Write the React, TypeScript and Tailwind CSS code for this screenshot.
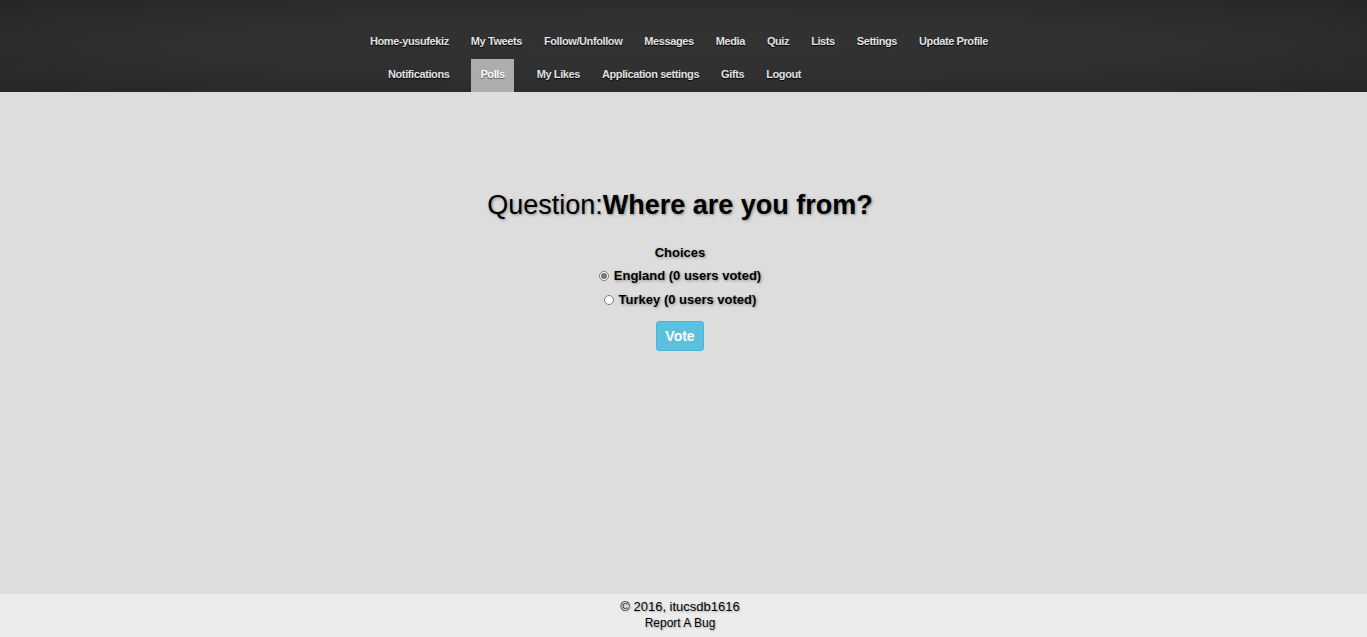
import { useState } from "react";

const topRow = [
  "Home-yusufekiz",
  "My Tweets",
  "Follow/Unfollow",
  "Messages",
  "Media",
  "Quiz",
  "Lists",
  "Settings",
  "Update Profile",
];

const bottomRow = ["Notifications", "Polls", "My Likes", "Application settings", "Gifts", "Logout"];

const choices = [
  { label: "England", votes: 0, gap: "mt-[3px]" },
  { label: "Turkey", votes: 0, gap: "mt-[4px]" },
];

function NavItem({ label, active, top }: { label: string; active?: boolean; top?: boolean }) {
  return (
    <a
      href="#"
      className={
        "block shrink-0 whitespace-nowrap text-[11px] font-bold tracking-[-0.4px] " +
        (top ? "h-[34px] leading-[32px] " : "h-[33px] leading-[31px] ") +
        (active
          ? "ml-[11px] mr-[12px] bg-[#adadad] px-[9px] text-white [text-shadow:0_1px_1px_#555]"
          : "px-[11px] text-[#e2e2e2] [text-shadow:0_1px_1px_#000]")
      }
    >
      {label}
    </a>
  );
}

export default function App() {
  const [picked, setPicked] = useState("England");

  return (
    <div className="flex h-screen flex-col font-['Liberation_Sans',Arial,sans-serif] text-black">
      <header className="h-[92px] bg-[radial-gradient(ellipse_at_center,#333333_0%,#2f2f2f_55%,#262626_100%)] pt-[25px]">
        <div className="flex justify-center pr-[11px]">
          <nav className="w-[638px]">
            <div className="flex">
              {topRow.map((item) => (
                <NavItem key={item} label={item} top />
              ))}
            </div>
            <div className="flex pl-[18px]">
              {bottomRow.map((item) => (
                <NavItem key={item} label={item} active={item === "Polls"} />
              ))}
            </div>
          </nav>
        </div>
      </header>

      <main className="flex flex-1 flex-col items-center bg-[#dddddd] pr-[7px] pt-[97px] [text-shadow:1px_1px_3px_#8a8a8a]">
        <h1 className="text-[27px] leading-[32px]">
          Question:<b>Where are you from?</b>
        </h1>
        <form className="mt-[22px] flex flex-col items-center" onSubmit={(e) => e.preventDefault()}>
          <div className="text-[13px] font-bold leading-[20px]">Choices</div>
          {choices.map((c) => (
            <label key={c.label} className={c.gap + " flex items-center text-[13px] font-bold leading-[20px]"}>
              <input
                type="radio"
                name="choice"
                checked={picked === c.label}
                onChange={() => setPicked(c.label)}
                className="mr-[5px] h-[10px] w-[10px] accent-[#777]"
              />
              {c.label} ({c.votes} users voted)
            </label>
          ))}
          <button
            type="submit"
            className="mt-[11px] h-[30px] w-[48px] rounded-[3px] border border-[#46b8da] bg-[#5bc0de] text-[14px] font-bold text-white [text-shadow:none]"
          >
            Vote
          </button>
        </form>
      </main>

      <footer className="flex h-[43px] flex-col items-center bg-[#ececec] pr-[7px] pt-[4px] [text-shadow:1px_1px_2px_#aaa]">
        <div className="text-[13px] leading-[17px]">© 2016, itucsdb1616</div>
        <a href="#" className="text-[12px] leading-[17px]">
          Report A Bug
        </a>
      </footer>
    </div>
  );
}
